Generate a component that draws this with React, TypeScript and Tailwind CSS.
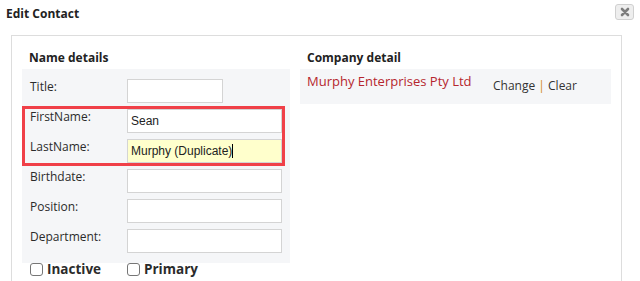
const Field = ({ label, value, wide = true, highlight = false, caret = false }: { label: string; value?: string; wide?: boolean; highlight?: boolean; caret?: boolean }) => (
  <div className="flex">
    <div className="w-[97px] text-[12px] leading-[16px] text-[#2b2b2b]">{label}</div>
    <div
      className={`${wide ? "w-[155px]" : "w-[96px]"} ${highlight ? "bg-[#ffffcc]" : "bg-white"} h-[24px] border border-[#d4d4d4] flex items-center px-[3px] font-['Liberation_Sans',Arial,sans-serif] text-[12px] text-[#222]`}
    >
      {value}
      {caret && <span className="inline-block w-px h-[14px] bg-black" />}
    </div>
  </div>
)

const Check = ({ label }: { label: string }) => (
  <div className="flex items-center gap-[4px]">
    <span className="w-[13px] h-[13px] border border-[#767676] rounded-[3px] bg-white" />
    <span className="text-[13.5px] font-bold leading-[16px] text-[#2b2b2b]">{label}</span>
  </div>
)

export default function App() {
  return (
    <div className="w-[640px] h-[281px] overflow-hidden bg-white font-['Open_Sans',sans-serif]">
      <div className="h-[35px] flex justify-between pl-[6px] pr-[6px]">
        <div className="pt-[6px] text-[12px] font-bold leading-[16px] text-[#222]">Edit Contact</div>
        <button className="mt-[4px] w-[19px] h-[16px] rounded-[3px] border border-[#d0d0d0] bg-[#eeeeee] flex items-center justify-center">
          <svg width="10" height="10" viewBox="0 0 10 10">
            <path d="M2 2L8 8M8 2L2 8" stroke="#7d7d7d" strokeWidth="2.6" strokeLinecap="round" />
          </svg>
        </button>
      </div>

      <div className="ml-[11px] w-[611px] h-[260px] border border-b-0 border-[#dddddd] px-[10px] pt-[14px] grid grid-cols-[268px_311px] gap-x-[10px]">
        <div>
          <div className="pl-[7px] mb-[3px] text-[12px] font-bold leading-[16px] text-[#222]">Name details</div>
          <div className="relative bg-[#f5f6f8] px-[8px] py-[10px] flex flex-col gap-[6px]">
            <Field label="Title:" wide={false} />
            <Field label="FirstName:" value="Sean" />
            <Field label="LastName:" value="Murphy (Duplicate)" highlight caret />
            <Field label="Birthdate:" />
            <Field label="Position:" />
            <Field label="Department:" />
            <div className="absolute left-0 top-[37px] w-[263px] h-[60px] border-[3px] border-[#f04048]" />
          </div>
          <div className="flex h-[16px] -mt-[2px] pl-[8px]">
            <div className="w-[97px]">
              <Check label="Inactive" />
            </div>
            <Check label="Primary" />
          </div>
        </div>

        <div>
          <div className="pl-[7px] mb-[3px] text-[12px] font-bold leading-[16px] text-[#222]">Company detail</div>
          <div className="h-[35px] bg-[#f5f6f8] pl-[7px] flex">
            <div className="w-[186px] pt-[4px] text-[13px] leading-[16px] text-[#b5262e]">Murphy Enterprises Pty Ltd</div>
            <div className="pt-[9px] text-[12px] leading-[16px] text-[#333]">
              Change <span className="text-[#d08a2a]">|</span> Clear
            </div>
          </div>
        </div>
      </div>
    </div>
  )
}
